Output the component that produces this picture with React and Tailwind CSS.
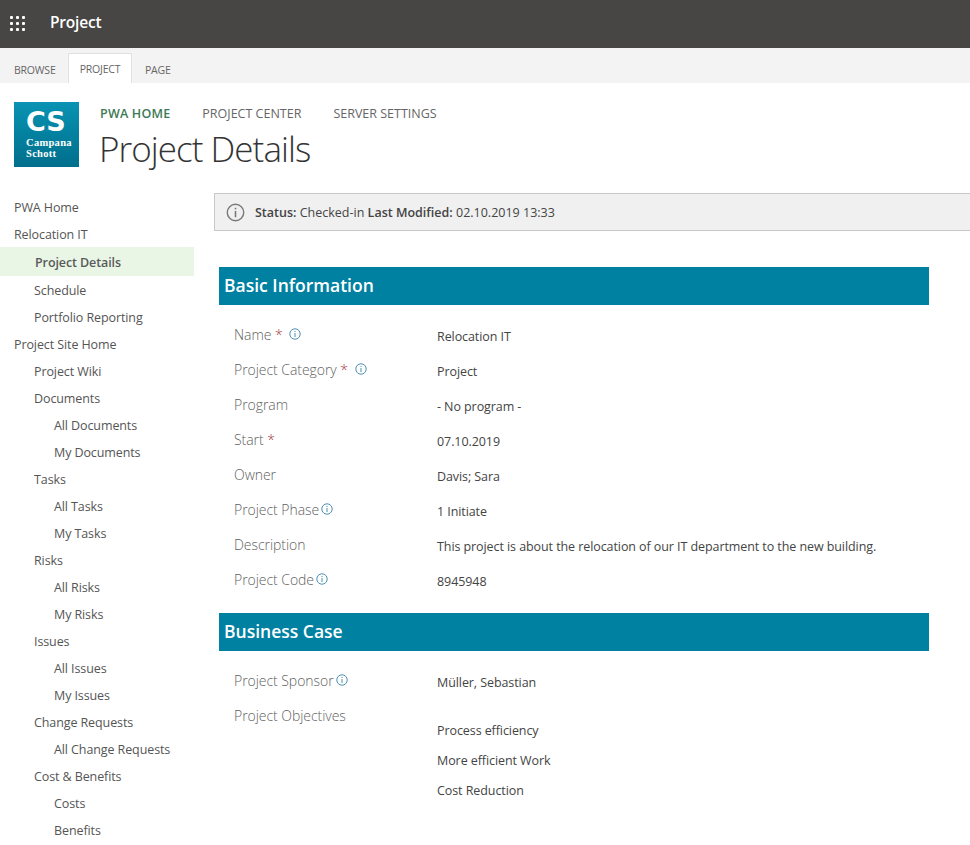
const font = { fontFamily: '"Open Sans", "Noto Sans", sans-serif' };

function Info({ size = 12, color = "#4f8fb0", stroke = 1 }) {
  return (
    <svg width={size} height={size} viewBox="0 0 12 12" className="shrink-0">
      <circle cx="6" cy="6" r="5.2" fill="none" stroke={color} strokeWidth={stroke} />
      <rect x="5.5" y="5" width="1" height="4" fill={color} />
      <rect x="5.5" y="3" width="1" height="1" fill={color} />
    </svg>
  );
}

function Waffle() {
  return (
    <div className="grid grid-cols-3 gap-[3px] w-[15px]">
      {Array.from({ length: 9 }).map((_, i) => (
        <div key={i} className="w-[3px] h-[3px] bg-white rounded-[1px]" />
      ))}
    </div>
  );
}

const nav = [
  ["PWA Home", 0], ["Relocation IT", 0], ["Project Details", 1, true], ["Schedule", 1], ["Portfolio Reporting", 1],
  ["Project Site Home", 0], ["Project Wiki", 1], ["Documents", 1], ["All Documents", 2], ["My Documents", 2],
  ["Tasks", 1], ["All Tasks", 2], ["My Tasks", 2], ["Risks", 1], ["All Risks", 2], ["My Risks", 2],
  ["Issues", 1], ["All Issues", 2], ["My Issues", 2], ["Change Requests", 1], ["All Change Requests", 2],
  ["Cost & Benefits", 1], ["Costs", 2], ["Benefits", 2],
];

function Sidebar() {
  return (
    <nav className="w-[194px] shrink-0 pt-[1px] text-[12.5px] tracking-[-0.1px] text-[#555]">
      {nav.map(([t, lvl, sel]) => (
        <div
          key={t}
          className={
            sel
              ? "h-[29px] -mt-px mb-px flex items-center pl-[35px] pt-[3px] bg-[#e9f6e6] font-semibold text-[#5a5a5a]"
              : lvl === 0
              ? "h-[27px] flex items-center pl-[14px] pt-[2px]"
              : lvl === 1
              ? "h-[27px] flex items-center pl-[34px] pt-[2px]"
              : "h-[27px] flex items-center pl-[54px] pt-[2px]"
          }
        >
          {t}
        </div>
      ))}
    </nav>
  );
}

function Row({ label, req, info, children, gap = "gap-[2px]" }) {
  return (
    <div className="h-[35px] flex items-center">
      <div className={`w-[218px] pl-[15px] flex items-center -mt-[5px] ${gap} text-[14px] font-light tracking-[-0.05px] text-[#5f5f5f]`}>
        <span className="whitespace-pre">
          {label}
          {req && <span className="text-[#a4373a]"> *</span>}
        </span>
        {info && <Info />}
      </div>
      <div className="text-[12.5px] pt-[2px] tracking-[-0.08px] text-[#444]">{children}</div>
    </div>
  );
}

function Heading({ children }) {
  return (
    <div className="h-[38px] bg-[#0081a1] flex items-center pl-[5px] pb-[2px] text-white text-[17.5px] font-semibold">
      {children}
    </div>
  );
}

export default function App() {
  return (
    <div style={font} className="w-[970px] h-[845px] overflow-hidden bg-white">
      <header className="h-[48px] bg-[#484644] flex items-center pl-[10px] pb-[2px] gap-[25px]">
        <Waffle />
        <span className="text-white text-[15.5px] font-semibold tracking-[-0.2px]">Project</span>
      </header>
      <div className="h-[35px] bg-[#f3f3f3] flex items-end text-[10.5px] tracking-[-0.2px] text-[#666]">
        <div className="w-[68px] h-[30px] flex items-center pl-[14px] pt-[5px]">BROWSE</div>
        <div className="w-[64px] h-[30px] flex items-center justify-center pt-[3px] bg-white border border-b-0 border-[#e1e1e1]">PROJECT</div>
        <div className="h-[30px] flex items-center pl-[13px] pt-[5px]">PAGE</div>
      </div>
      <div className="h-[110px] flex pl-[14px] pt-[19px]">
        <div className="w-[65px] h-[65px] bg-gradient-to-b from-[#0a93b3] to-[#006f8c] flex flex-col pl-[12px] pt-[4px] text-white">
          <span className="text-[27px] leading-[32px] font-bold" style={{ fontFamily: '"DejaVu Sans", sans-serif' }}>CS</span>
          <span className="text-[10.5px] leading-[10.5px] font-bold tracking-[0.3px]" style={{ fontFamily: '"Liberation Serif", serif' }}>Campana</span>
          <span className="text-[10.5px] leading-[10.5px] font-bold tracking-[0.3px]" style={{ fontFamily: '"Liberation Serif", serif' }}>Schott</span>
        </div>
        <div className="pl-[21px] flex flex-col">
          <div className="flex gap-[32px] text-[12.5px] text-[#666] h-[24px] items-center">
            <span className="font-semibold tracking-[0.2px] text-[#3e7a55]">PWA HOME</span>
            <span>PROJECT CENTER</span>
            <span>SERVER SETTINGS</span>
          </div>
          <h1 className="text-[35px] -ml-px font-light leading-[46px] tracking-[-0.95px] text-[#333]">Project Details</h1>
        </div>
      </div>
      <div className="flex">
        <Sidebar />
        <main className="flex-1 pl-[20px]">
          <div className="h-[38px] bg-[#f0f0f0] border border-[#c8c8c8] border-r-0 flex items-center pl-[11px] gap-[10px] text-[12.5px] text-[#444]">
            <Info size={19} color="#7a7a7a" stroke={0.9} />
            <span className="pt-[2px]">
              <b className="font-semibold">Status:</b> Checked-in <b className="font-semibold">Last Modified:</b> 02.10.2019 13:33
            </span>
          </div>
          <div className="ml-[5px] w-[710px] pt-[36px]">
            <Heading>Basic Information</Heading>
            <div className="pt-[14px] pb-[14px]">
              <Row label="Name" req info gap="gap-[6px]">Relocation IT</Row>
              <Row label="Project Category" req info gap="gap-[7px]">Project</Row>
              <Row label="Program">- No program -</Row>
              <Row label="Start" req>07.10.2019</Row>
              <Row label="Owner">Davis; Sara</Row>
              <Row label="Project Phase" info>1 Initiate</Row>
              <Row label="Description">This project is about the relocation of our IT department to the new building.</Row>
              <Row label="Project Code" info>8945948</Row>
            </div>
            <Heading>Business Case</Heading>
            <div className="pt-[14px]">
              <Row label="Project Sponsor" info>Müller, Sebastian</Row>
              <div className="flex">
                <div className="w-[218px] pl-[15px] pt-[5px] text-[14px] font-light tracking-[-0.05px] text-[#5f5f5f]">Project Objectives</div>
                <div className="text-[12.5px] tracking-[-0.08px] text-[#444] pt-[22px] flex flex-col gap-[13px] leading-[17px]">
                  <span>Process efficiency</span>
                  <span>More efficient Work</span>
                  <span>Cost Reduction</span>
                </div>
              </div>
            </div>
          </div>
        </main>
      </div>
    </div>
  );
}
